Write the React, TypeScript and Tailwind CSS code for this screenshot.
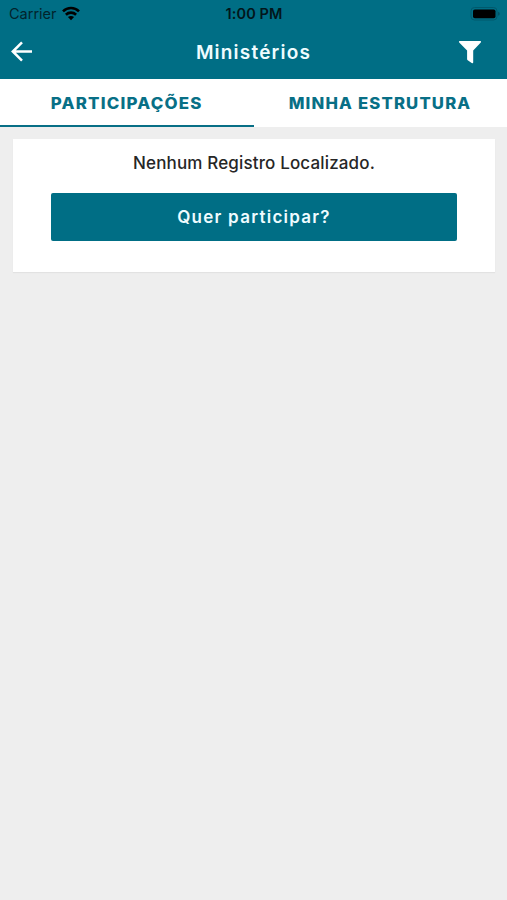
import React from "react";

function StatusBar() {
  return (
    <div className="grid h-[27px] grid-cols-3 items-center text-black">
      <div className="flex items-center gap-[5px] pl-[9px]">
        <span className="pt-[2px] text-[14.5px] leading-none text-[#02242c]">Carrier</span>
        <svg width="18" height="15" viewBox="0 0 18 15" fill="none" stroke="#000" strokeWidth="2.6">
          <path d="M1 5.4C5.5 .9 12.5 .9 17 5.4" />
          <path d="M3.9 8.7C6.8 5.9 11.2 5.9 14.1 8.7" />
          <path d="M9 14.3L5.9 11.1C7.6 9.5 10.4 9.5 12.1 11.1Z" fill="#000" stroke="none" />
        </svg>
      </div>
      <span className="pl-[1px] pt-[2px] text-center text-[14.5px] font-semibold leading-none tracking-[0.1px] text-[#02161b]">
        1:00 PM
      </span>
      <div className="flex justify-end pr-[6px]">
        <svg width="31" height="14" viewBox="0 0 31 14">
          <rect x="1" y="0.5" width="26" height="12.5" rx="3.5" fill="none" stroke="#00596c" />
          <rect x="3" y="2.4" width="22.5" height="8.9" rx="1.8" fill="#000" />
          <path d="M28.3 4.7C30 5.4 30 8 28.3 8.8Z" fill="#00495a" />
        </svg>
      </div>
    </div>
  );
}

function NavBar() {
  return (
    <div className="grid h-[50px] grid-cols-[60px_1fr_60px] items-center">
      <button aria-label="Voltar" className="pl-[11px]">
        <svg width="22" height="22" viewBox="0 0 22 22" fill="none" stroke="#fff" strokeWidth="2.5">
          <path d="M11 1.3L1.8 10.5L11 19.7M2 10.5H21" />
        </svg>
      </button>
      <h1 className="text-center text-[19px] font-[560] leading-none tracking-[1.2px] text-[#effcff]">
        Ministérios
      </h1>
      <button aria-label="Filtrar" className="pb-px pl-[11px]">
        <svg width="24" height="24" viewBox="0 0 24 24" fill="#fff">
          <path d="M1.6 1H22.4Q23.6 1.3 22.8 2.4L15.2 10.5V22.4Q15 23.6 13.7 23L9.7 20.2Q9.1 19.8 9.1 19V10.5L1.2 2.4Q.4 1.3 1.6 1Z" />
        </svg>
      </button>
    </div>
  );
}

export default function App() {
  return (
    <div className="flex h-[900px] w-[507px] flex-col overflow-hidden bg-[#eeeeee] font-[Inter,sans-serif]">
      <header className="h-[79px] bg-[#006e85]">
        <StatusBar />
        <NavBar />
      </header>
      <nav className="grid h-[48px] grid-cols-2 bg-white text-[15.5px] font-extrabold text-[#086f86]">
        <button className="border-b-[2.5px] border-[#086f86] pt-[3px] leading-none tracking-[1.1px]">
          <span className="inline-block scale-x-[1.09]">PARTICIPAÇÕES</span>
        </button>
        <button className="border-b-[2.5px] border-white pt-[3px] leading-none tracking-[1.1px]">
          <span className="inline-block scale-x-[1.075]">MINHA ESTRUTURA</span>
        </button>
      </nav>
      <main className="mx-[13px] mt-[12px] flex h-[133px] w-[482px] flex-col items-center bg-white shadow-[0_1px_1px_#e2e2e2]">
        <p className="mt-[12px] text-[17px] font-medium leading-[24px] tracking-[0.15px] text-[#262626]">
          Nenhum Registro Localizado.
        </p>
        <button className="mt-[18px] h-[48px] w-[406px] rounded-[2px] bg-[#006e85] text-[17px] font-semibold leading-none tracking-[1.25px] text-[#effcff]">
          Quer participar?
        </button>
      </main>
    </div>
  );
}
